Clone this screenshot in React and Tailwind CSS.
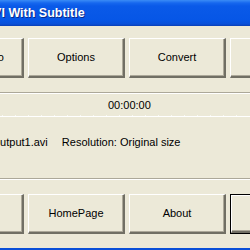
import React from "react";

const Button = ({ label, isDefault }) => {
  return (
    <div
      className={
        "w-[97px] h-[40px] shrink-0 " +
        (isDefault ? "border border-black" : "")
      }
    >
      <div className="w-full h-full flex items-center justify-center whitespace-nowrap border-t border-l border-t-white border-l-white border-r-2 border-b-2 border-r-[#716f64] border-b-[#716f64] bg-[#ece9d8] shadow-[inset_-1px_-1px_0_#aca899]">
        {label}
      </div>
    </div>
  );
};

const App = () => {
  const ticks = [];
  for (let i = 0; i < 19; i++) ticks.push(i);

  return (
    <div className="w-[250px] h-[250px] overflow-hidden flex flex-col bg-[#ece9d8] font-['Liberation_Sans',Arial,sans-serif] text-[11px] text-black">
      {/* title bar */}
      <div className="h-[26px] shrink-0 flex items-center overflow-hidden bg-[linear-gradient(to_bottom,#3a8cf6_0px,#1667ee_3px,#0a5ae8_6px,#0656e6_20px,#0a50d8_24px,#0a3fb5_26px)]">
        <span className="ml-[-15px] mt-[1px] whitespace-nowrap text-[12.5px] font-bold text-white [text-shadow:1px_1px_0_#0a2a8a]">
          AVI With Subtitle
        </span>
      </div>

      {/* top buttons */}
      <div className="mt-[12px] ml-[-73px] flex gap-[4px]">
        <Button label="Open Video" />
        <Button label="Options" />
        <Button label="Convert" />
        <Button label="Exit" />
      </div>

      <div className="mt-[14px] h-[2px] shrink-0 border-t border-b border-t-[#aca899] border-b-white" />

      {/* time */}
      <div className="mt-[4px] h-[14px] leading-[14px] pl-[108px] shrink-0">00:00:00</div>

      {/* progress track */}
      <div className="mt-[3px] h-[1px] shrink-0 flex gap-[12px] pl-[2px]">
        {ticks.map((t) => (
          <div key={t} className="w-[1px] h-[1px] bg-white/70 shrink-0" />
        ))}
      </div>
      <div className="h-[1px] shrink-0 bg-white" />

      {/* output info */}
      <div className="mt-[18px] h-[14px] leading-[14px] shrink-0 flex whitespace-nowrap">
        <span className="ml-[-6px]">output1.avi</span>
        <span className="ml-[14px]">Resolution: Original size</span>
      </div>

      <div className="mt-[29px] h-[2px] shrink-0 border-t border-b border-t-[#aca899] border-b-white" />

      {/* bottom buttons */}
      <div className="mt-[14px] ml-[-73px] flex gap-[4px]">
        <Button label="Help" />
        <Button label="HomePage" />
        <Button label="About" />
        <Button label="OK" isDefault />
      </div>

      <div className="mt-auto h-[2px] shrink-0 bg-[#0a4fd8]" />
    </div>
  );
};

export default App;
